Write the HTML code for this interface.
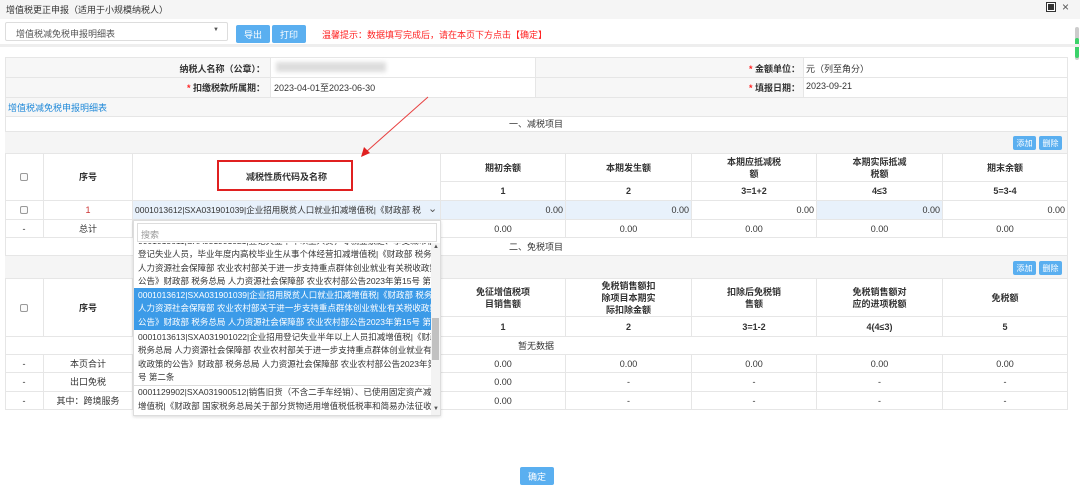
<!DOCTYPE html>
<html><head><meta charset="utf-8"><style>
*{margin:0;padding:0;box-sizing:border-box}
body{width:1080px;height:496px;background:#fff;position:relative;overflow:hidden;font-family:"Liberation Sans","Noto Sans CJK SC",sans-serif;font-size:9px;color:#333}
.a{position:absolute}
.c{position:absolute;border-right:1px solid #e6e6e6;border-bottom:1px solid #e6e6e6;display:flex;align-items:center;justify-content:center;text-align:center;line-height:12px;white-space:nowrap;overflow:hidden}
.b{font-weight:bold;color:#333}
.btn{position:absolute;background:#5aaff0;color:#fff;border-radius:2px;display:flex;align-items:center;justify-content:center;font-size:9px}
.cb{width:8px;height:8px;border:1px solid #999;border-radius:2px;background:#fafafa}
.lb{background:#e8f1fb}
.r{justify-content:flex-end;padding-right:2px}
.dd{white-space:nowrap;overflow:hidden;line-height:13.3px;padding-left:4px;font-size:8.5px}
</style></head><body>
<div class="a" style="left:0;top:0;width:1080px;height:19px;background:#f5f5f5"></div>
<div class="a" style="left:6px;top:3px;font-size:9px">增值税更正申报（适用于小规模纳税人）</div>
<div class="a" style="left:1047px;top:3px;width:8px;height:8px;background:#333;border:1px solid #fff;outline:1px solid #333"></div>
<div class="a" style="left:1062px;top:0px;font-size:12px;color:#555">×</div>
<div class="a" style="left:1075px;top:27px;width:4px;height:33px;background:#ccc;border-radius:2px"></div>
<div class="a" style="left:1075px;top:38px;width:4px;height:20px;background:#3cd26a;border-radius:2px"></div>

<div class="a" style="left:5px;top:22px;width:223px;height:19px;border:1px solid #ddd;border-radius:2px;padding:4px 0 0 10px;color:#555">增值税减免税申报明细表<span style="position:absolute;right:8px;top:4px;font-size:6px">▼</span></div>
<div class="btn" style="left:236px;top:25px;width:34px;height:18px">导出</div>
<div class="btn" style="left:272px;top:25px;width:34px;height:18px">打印</div>
<div class="a" style="left:322px;top:28px;color:#f22;font-size:9px">温馨提示：数据填写完成后，请在本页下方点击【确定】</div>
<div class="a" style="left:0;top:44px;width:1080px;height:3px;background:#eee"></div>

<div class="a" style="left:5px;top:57px;width:1063px;height:60px;border:1px solid #e6e6e6;background:#f7f7f7"></div>
<div class="a" style="left:270px;top:58px;width:266px;height:39px;background:#fff;border-left:1px solid #e6e6e6;border-right:1px solid #e6e6e6"></div>
<div class="a" style="left:803px;top:58px;width:264px;height:39px;background:#fff;border-left:1px solid #e6e6e6"></div>
<div class="a" style="left:5px;top:77px;width:1063px;height:1px;background:#e6e6e6"></div>
<div class="a" style="left:5px;top:97px;width:1063px;height:1px;background:#e6e6e6"></div>
<div class="a b" style="left:150px;top:62px;width:115px;text-align:right">纳税人名称（公章）：</div>
<div class="a" style="left:276px;top:62px;width:110px;height:10px;background:#ddd;filter:blur(2px)"></div>
<div class="a b" style="left:150px;top:81px;width:115px;text-align:right"><span style="color:#f22">*</span> 扣缴税款所属期：</div>
<div class="a" style="left:274px;top:81px">2023-04-01至2023-06-30</div>
<div class="a b" style="left:700px;top:62px;width:100px;text-align:right"><span style="color:#f22">*</span> 金额单位：</div>
<div class="a" style="left:806px;top:62px">元（列至角分）</div>
<div class="a b" style="left:700px;top:81px;width:100px;text-align:right"><span style="color:#f22">*</span> 填报日期：</div>
<div class="a" style="left:806px;top:81px">2023-09-21</div>
<div class="a" style="left:8px;top:101px;color:#1e88d8;font-size:9px">增值税减免税申报明细表</div>

<div class="a" style="left:5px;top:117px;width:1063px;height:293px;border-left:1px solid #e6e6e6"></div>
<div class="c" style="left:5px;top:117px;width:1063px;height:15px">一、减税项目</div>
<div class="c" style="left:5px;top:132px;width:1063px;height:22px;background:#f5f5f5"></div>
<div class="btn" style="left:1013px;top:136px;width:23px;height:14px;font-size:8px">添加</div>
<div class="btn" style="left:1039px;top:136px;width:23px;height:14px;font-size:8px">删除</div>

<div class="c" style="left:5px;top:154px;width:39px;height:47px"><div class="cb"></div></div>
<div class="c b" style="left:44px;top:154px;width:89px;height:47px">序号</div>
<div class="c b" style="left:133px;top:154px;width:308px;height:47px">减税性质代码及名称</div>
<div class="c b" style="left:441px;top:154px;width:125px;height:28px">期初余额</div>
<div class="c b" style="left:566px;top:154px;width:126px;height:28px">本期发生额</div>
<div class="c b" style="left:692px;top:154px;width:125px;height:28px">本期应抵减税<br>额</div>
<div class="c b" style="left:817px;top:154px;width:126px;height:28px">本期实际抵减<br>税额</div>
<div class="c b" style="left:943px;top:154px;width:125px;height:28px">期末余额</div>
<div class="c b" style="left:441px;top:182px;width:125px;height:19px">1</div>
<div class="c b" style="left:566px;top:182px;width:126px;height:19px">2</div>
<div class="c b" style="left:692px;top:182px;width:125px;height:19px">3=1+2</div>
<div class="c b" style="left:817px;top:182px;width:126px;height:19px">4≤3</div>
<div class="c b" style="left:943px;top:182px;width:125px;height:19px">5=3-4</div>

<div class="c" style="left:5px;top:201px;width:39px;height:19px"><div class="cb"></div></div>
<div class="c" style="left:44px;top:201px;width:89px;height:19px;color:#c33">1</div>
<div class="c lb" style="left:133px;top:201px;width:308px;height:19px;justify-content:flex-start;padding-left:2px;font-size:8.5px"><span style="width:286px;overflow:hidden;display:block">0001013612|SXA031901039|企业招用脱贫人口就业扣减增值税|《财政部 税务总局</span></div>
<div class="a" style="left:428px;top:202px;font-size:11px;color:#555">⌄</div>
<div class="c lb r" style="left:441px;top:201px;width:125px;height:19px">0.00</div>
<div class="c lb r" style="left:566px;top:201px;width:126px;height:19px">0.00</div>
<div class="c r" style="left:692px;top:201px;width:125px;height:19px">0.00</div>
<div class="c lb r" style="left:817px;top:201px;width:126px;height:19px">0.00</div>
<div class="c r" style="left:943px;top:201px;width:125px;height:19px">0.00</div>

<div class="c" style="left:5px;top:220px;width:39px;height:18px">-</div>
<div class="c" style="left:44px;top:220px;width:89px;height:18px">总计</div>
<div class="c" style="left:133px;top:220px;width:308px;height:18px"></div>
<div class="c" style="left:441px;top:220px;width:125px;height:18px">0.00</div>
<div class="c" style="left:566px;top:220px;width:126px;height:18px">0.00</div>
<div class="c" style="left:692px;top:220px;width:125px;height:18px">0.00</div>
<div class="c" style="left:817px;top:220px;width:126px;height:18px">0.00</div>
<div class="c" style="left:943px;top:220px;width:125px;height:18px">0.00</div>

<div class="c" style="left:5px;top:238px;width:1063px;height:18px">二、免税项目</div>
<div class="c" style="left:5px;top:256px;width:1063px;height:23px;background:#f5f5f5"></div>
<div class="btn" style="left:1013px;top:261px;width:23px;height:14px;font-size:8px">添加</div>
<div class="btn" style="left:1039px;top:261px;width:23px;height:14px;font-size:8px">删除</div>
<div class="c" style="left:5px;top:279px;width:39px;height:58px"><div class="cb"></div></div>
<div class="c b" style="left:44px;top:279px;width:89px;height:58px">序号</div>
<div class="c" style="left:133px;top:279px;width:308px;height:58px"></div>
<div class="c b" style="left:441px;top:279px;width:125px;height:38px">免征增值税项<br>目销售额</div>
<div class="c b" style="left:566px;top:279px;width:126px;height:38px">免税销售额扣<br>除项目本期实<br>际扣除金额</div>
<div class="c b" style="left:692px;top:279px;width:125px;height:38px">扣除后免税销<br>售额</div>
<div class="c b" style="left:817px;top:279px;width:126px;height:38px">免税销售额对<br>应的进项税额</div>
<div class="c b" style="left:943px;top:279px;width:125px;height:38px">免税额</div>
<div class="c b" style="left:441px;top:317px;width:125px;height:20px">1</div>
<div class="c b" style="left:566px;top:317px;width:126px;height:20px">2</div>
<div class="c b" style="left:692px;top:317px;width:125px;height:20px">3=1-2</div>
<div class="c b" style="left:817px;top:317px;width:126px;height:20px">4(4≤3)</div>
<div class="c b" style="left:943px;top:317px;width:125px;height:20px">5</div>
<div class="c" style="left:5px;top:337px;width:1063px;height:18px">暂无数据</div>

<div class="c" style="left:5px;top:355px;width:39px;height:18px">-</div>
<div class="c" style="left:44px;top:355px;width:89px;height:18px">本页合计</div>
<div class="c" style="left:133px;top:355px;width:308px;height:18px"></div>
<div class="c" style="left:441px;top:355px;width:125px;height:18px">0.00</div>
<div class="c" style="left:566px;top:355px;width:126px;height:18px">0.00</div>
<div class="c" style="left:692px;top:355px;width:125px;height:18px">0.00</div>
<div class="c" style="left:817px;top:355px;width:126px;height:18px">0.00</div>
<div class="c" style="left:943px;top:355px;width:125px;height:18px">0.00</div>

<div class="c" style="left:5px;top:373px;width:39px;height:19px">-</div>
<div class="c" style="left:44px;top:373px;width:89px;height:19px">出口免税</div>
<div class="c" style="left:133px;top:373px;width:308px;height:19px"></div>
<div class="c" style="left:441px;top:373px;width:125px;height:19px">0.00</div>
<div class="c" style="left:566px;top:373px;width:126px;height:19px">-</div>
<div class="c" style="left:692px;top:373px;width:125px;height:19px">-</div>
<div class="c" style="left:817px;top:373px;width:126px;height:19px">-</div>
<div class="c" style="left:943px;top:373px;width:125px;height:19px">-</div>

<div class="c" style="left:5px;top:392px;width:39px;height:18px">-</div>
<div class="c" style="left:44px;top:392px;width:89px;height:18px">其中：跨境服务</div>
<div class="c" style="left:133px;top:392px;width:308px;height:18px"></div>
<div class="c" style="left:441px;top:392px;width:125px;height:18px">0.00</div>
<div class="c" style="left:566px;top:392px;width:126px;height:18px">-</div>
<div class="c" style="left:692px;top:392px;width:125px;height:18px">-</div>
<div class="c" style="left:817px;top:392px;width:126px;height:18px">-</div>
<div class="c" style="left:943px;top:392px;width:125px;height:18px">-</div>

<div class="a" style="left:133px;top:220px;width:308px;height:196px;background:#fff;border:1px solid #ddd;box-shadow:0 1px 3px rgba(0,0,0,.15)"></div>
<div class="a" style="left:137px;top:223px;width:300px;height:19px;border:1px solid #ddd;padding:4px 0 0 3px;color:#999">搜索</div>
<div class="a" style="left:134px;top:243px;width:297px;height:172px;overflow:hidden">
 <div class="dd" style="margin-top:-8px">0001013611|SXA031901021|登记失业半年以上人员，零就业家庭、享受城市低保</div>
 <div class="dd">登记失业人员，毕业年度内高校毕业生从事个体经营扣减增值税|《财政部 税务总局</div>
 <div class="dd">人力资源社会保障部 农业农村部关于进一步支持重点群体创业就业有关税收政策的</div>
 <div class="dd">公告》财政部 税务总局 人力资源社会保障部 农业农村部公告2023年第15号 第一条</div>
 <div style="background:#3c9be8;color:#fff;padding:1px 0">
 <div class="dd">0001013612|SXA031901039|企业招用脱贫人口就业扣减增值税|《财政部 税务总局</div>
 <div class="dd">人力资源社会保障部 农业农村部关于进一步支持重点群体创业就业有关税收政策的</div>
 <div class="dd">公告》财政部 税务总局 人力资源社会保障部 农业农村部公告2023年第15号 第二条</div></div>
 <div style="border-bottom:1px solid #ddd;padding:1px 0">
 <div class="dd">0001013613|SXA031901022|企业招用登记失业半年以上人员扣减增值税|《财政部</div>
 <div class="dd">税务总局 人力资源社会保障部 农业农村部关于进一步支持重点群体创业就业有关税</div>
 <div class="dd">收政策的公告》财政部 税务总局 人力资源社会保障部 农业农村部公告2023年第15</div>
 <div class="dd">号 第二条</div></div>
 <div class="dd">0001129902|SXA031900512|销售旧货（不含二手车经销）、已使用固定资产减征</div>
 <div class="dd">增值税|《财政部 国家税务总局关于部分货物适用增值税低税率和简易办法征收增值</div>
</div>
<div class="a" style="left:431px;top:243px;width:9px;height:172px;background:#f3f3f3"></div>
<div class="a" style="left:432px;top:318px;width:7px;height:42px;background:#c1c1c1"></div>
<div class="a" style="left:433px;top:244px;font-size:6px;color:#555">▲</div>
<div class="a" style="left:433px;top:406px;font-size:6px;color:#555">▼</div>

<div class="a" style="left:217px;top:160px;width:136px;height:31px;border:2px solid #e02020"></div>
<svg class="a" style="left:0;top:0" width="1080" height="496"><line x1="428" y1="97" x2="366" y2="152" stroke="#e84040" stroke-width="1"/><polygon points="361,157 364,147 370,153" fill="#e02020"/></svg>

<div class="btn" style="left:520px;top:467px;width:34px;height:18px;font-size:9px">确定</div>
</body></html>
